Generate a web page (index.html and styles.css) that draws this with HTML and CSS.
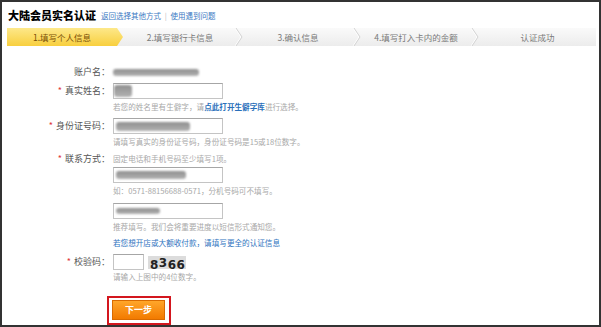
FILE: index.html
```html
<!DOCTYPE html>
<html lang="zh-CN">
	<head>
		<meta charset="utf-8" />
		<title>大陆会员实名认证</title>
		<link rel="stylesheet" href="styles.css">
	</head>
	<body>
		<div class="frame">
			<div class="head">
				<h1>大陆会员实名认证</h1>
				<div class="links">
					<a href="#">返回选择其他方式</a>
					<span class="bar">|</span>
					<a href="#">使用遇到问题</a>
				</div>
			</div>

			<div class="steps">
				<div class="step on">1.填写个人信息</div>
				<div class="step">2.填写银行卡信息<svg class="chev" viewBox="0 0 8 18"><polyline points="0,0 6,9 0,18" stroke="#ffffff" /><polyline points="1,0 7,9 1,18" stroke="#d3d3d3" /></svg></div>
				<div class="step">3.确认信息<svg class="chev" viewBox="0 0 8 18"><polyline points="0,0 6,9 0,18" stroke="#ffffff" /><polyline points="1,0 7,9 1,18" stroke="#d3d3d3" /></svg></div>
				<div class="step">4.填写打入卡内的金额<svg class="chev" viewBox="0 0 8 18"><polyline points="0,0 6,9 0,18" stroke="#ffffff" /><polyline points="1,0 7,9 1,18" stroke="#d3d3d3" /></svg></div>
				<div class="step last">认证成功</div>
			</div>

			<form class="form">
				<div class="row first">
					<label class="label">账户名：</label>
					<div class="field">
						<div class="line"><span class="blur account"></span></div>
					</div>
				</div>

				<div class="row gap3">
					<label class="label"><i>*</i>真实姓名：</label>
					<div class="field">
						<div class="input"><span class="blur name"></span></div>
						<p class="hint">若您的姓名里有生僻字，请<a href="#">点此打开生僻字库</a>进行选择。</p>
					</div>
				</div>

				<div class="row gap4">
					<label class="label"><i>*</i>身份证号码：</label>
					<div class="field">
						<div class="input"><span class="blur idno"></span></div>
						<p class="hint">请填写真实的身份证号码，身份证号码是15或18位数字。</p>
					</div>
				</div>

				<div class="row gap2">
					<label class="label"><i>*</i>联系方式：</label>
					<div class="field">
						<p class="line hint">固定电话和手机号码至少填写1项。</p>
						<div class="input"><span class="blur phone"></span></div>
						<p class="hint">如：0571-88156688-0571，分机号码可不填写。</p>
						<div class="input gap5"><span class="blur mobile"></span></div>
						<p class="hint">推荐填写。我们会将重要进度以短信形式通知您。</p>
						<p class="more"><a href="#">若您想开店或大额收付款，请填写更全的认证信息</a></p>
					</div>
				</div>

				<div class="row gap4">
					<label class="label"><i>*</i>校验码：</label>
					<div class="field">
						<div class="code">
							<div class="input short"></div>
							<div class="captcha">8<span class="up">3</span>66</div>
						</div>
						<p class="hint tight">请输入上图中的4位数字。</p>
						<div class="submit">
							<button type="button">下一步</button>
						</div>
					</div>
				</div>
			</form>
		</div>
	</body>
</html>
```

FILE: styles.css
```css
body {
	background: #ffffff;
	margin: 0;
	font-family: "Noto Sans CJK SC", "Liberation Sans", sans-serif;
}

.frame {
	border: 2px solid #333333;
	box-sizing: border-box;
	height: 327px;
	overflow: hidden;
	padding: 0 3px 0 5px;
}

a {
	text-decoration: none;
}

p {
	margin: 0;
}

.head {
	align-items: center;
	display: flex;
	height: 26px;
	padding-left: 1px;
}

h1 {
	color: #000000;
	font-size: 11px;
	font-weight: 900;
	line-height: 14px;
	margin: 0 5px 0 0;
}

.links {
	color: #bbbbbb;
	font-size: 7.5px;
	line-height: 12px;
	padding-top: 2px;
}

.links a {
	color: #3a78c2;
}

.links .bar {
	margin: 0 2px;
}

.steps {
	background: linear-gradient(#fafafa, #ececec);
	display: flex;
	height: 18px;
}

.step {
	box-sizing: border-box;
	color: #7a7a7a;
	flex: 0 0 118px;
	font-size: 8.5px;
	line-height: 18px;
	padding-right: 8px;
	position: relative;
	text-align: center;
}

.step.on {
	background: linear-gradient(#fde88a, #f8cf3e);
	clip-path: polygon(0 0, calc(100% - 8px) 0, calc(100% - 2px) 50%, calc(100% - 8px) 100%, 0 100%);
	color: #7a4f06;
}

.step.last {
	flex: 1;
	padding-right: 0;
}

.chev {
	fill: none;
	height: 18px;
	position: absolute;
	right: 0;
	stroke-width: 1;
	top: 0;
	width: 8px;
}

.form {
	margin: 0;
}

.row {
	column-gap: 3px;
	display: grid;
	grid-template-columns: 103px 1fr;
}

.row.first {
	margin-top: 18px;
}

.gap2 {
	margin-top: 2px;
}

.gap3 {
	margin-top: 3px;
}

.gap4 {
	margin-top: 4px;
}

.gap5 {
	margin-top: 5px;
}

.label {
	color: #555555;
	font-size: 9px;
	line-height: 16px;
	text-align: right;
	white-space: nowrap;
}

.label i {
	color: #e0343a;
	font-style: normal;
	margin-right: 3px;
}

.line {
	align-items: center;
	display: flex;
	height: 16px;
}

.input {
	align-items: center;
	border: 1px solid #c4c4c4;
	border-top-color: #a6a6a6;
	box-sizing: border-box;
	display: flex;
	height: 16px;
	padding-left: 2px;
	width: 110px;
}

.input.short {
	width: 31px;
}

.blur {
	background: linear-gradient(#8f8f8f, #b2b2b2);
	border-radius: 3px;
	display: block;
	filter: blur(1px);
	height: 8px;
}

.account {
	height: 7px;
	width: 86px;
}

.name {
	height: 12px;
	margin-left: -2px;
	width: 18px;
}

.idno {
	height: 9px;
	width: 74px;
}

.phone {
	height: 8px;
	width: 70px;
}

.mobile {
	height: 6px;
	width: 44px;
}

.hint {
	color: #a8a8a8;
	font-size: 7.6px;
	line-height: 14px;
	white-space: nowrap;
}

.hint a {
	color: #2a6fba;
	font-weight: bold;
}

.line.hint {
	line-height: 16px;
}

.field > .hint {
	margin-top: 1px;
}

.field > .line.hint {
	margin-top: 0;
}

.hint.tight {
	line-height: 12px;
}

.more {
	font-size: 7.6px;
	line-height: 14px;
	margin-top: 2px;
	white-space: nowrap;
}

.more a {
	color: #2f74c0;
}

.code {
	align-items: center;
	display: flex;
	gap: 4px;
}

.captcha {
	background: #dcdcdc;
	color: #222222;
	font-family: "DejaVu Sans", sans-serif;
	font-size: 12px;
	font-weight: bold;
	height: 13px;
	letter-spacing: 0.5px;
	line-height: 14px;
	padding: 0 2px;
	width: 34px;
}

.captcha .up {
	vertical-align: 2px;
}

.submit {
	border: 2px solid #d3161e;
	margin: 13px 0 0 -6px;
	padding: 2px 4px 3px 3px;
	width: 53px;
}

.submit button {
	background: linear-gradient(#ffa62a, #f27a00);
	border: 1px solid #d96b00;
	color: #ffffff;
	cursor: pointer;
	display: block;
	font-family: "Noto Sans CJK SC", sans-serif;
	font-size: 9px;
	font-weight: bold;
	height: 20px;
	line-height: 18px;
	padding: 0;
	width: 53px;
}
```
